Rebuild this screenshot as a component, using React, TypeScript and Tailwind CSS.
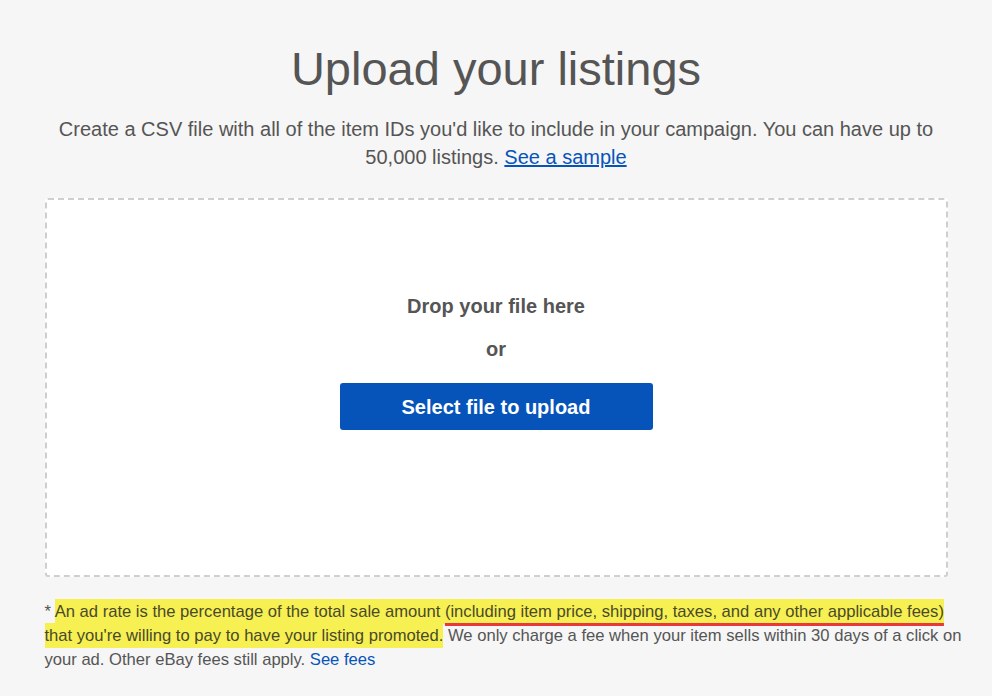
import React from 'react';

export default function App() {
  return (
    <div className="min-h-[696px] w-full bg-[#f6f6f6] font-['Liberation_Sans',Arial,sans-serif] text-[#555]">
      <div className="mx-auto w-[903px] pt-[40px]">
        <h1 className="text-center text-[47px] leading-[58px] font-normal text-[#555]">Upload your listings</h1>
        <p className="mt-[17px] text-center text-[20px] leading-[28px] text-[#555]">
          Create a CSV file with all of the item IDs you'd like to include in your campaign. You can have up to
          <br />
          50,000 listings. <a href="#" className="text-[#0654ba] underline">See a sample</a>
        </p>

        <div className="mt-[27px] h-[379px] rounded-[3px] border-2 border-dashed border-[#cfcfcf] bg-white flex flex-col items-center pt-[94px]">
          <div className="text-[20px] leading-[24px] font-bold text-[#555]">Drop your file here</div>
          <div className="mt-[19px] text-[20px] leading-[24px] font-bold text-[#555]">or</div>
          <button className="mt-[22px] h-[47px] w-[313px] rounded-[3px] bg-[#0654ba] text-[20px] font-bold text-white">
            Select file to upload
          </button>
        </div>

        <p className="mt-[23px] whitespace-nowrap text-[16.6px] leading-[24px] text-[#555]">
          *{' '}
          <span className="bg-[#f7f052] py-[3px] box-decoration-clone text-[#4a4a2a]">
            An ad rate is the percentage of the total sale amount{' '}
            <span className="underline decoration-[#e8383d] decoration-[3px] underline-offset-[6px]">
              (including item price, shipping, taxes, and any other applicable fees)
            </span>
            <br />
            that you're willing to pay to have your listing promoted.
          </span>{' '}
          We only charge a fee when your item sells within 30 days of a click on
          <br />
          your ad. Other eBay fees still apply. <a href="#" className="text-[#0654ba]">See fees</a>
        </p>
      </div>
    </div>
  );
}
